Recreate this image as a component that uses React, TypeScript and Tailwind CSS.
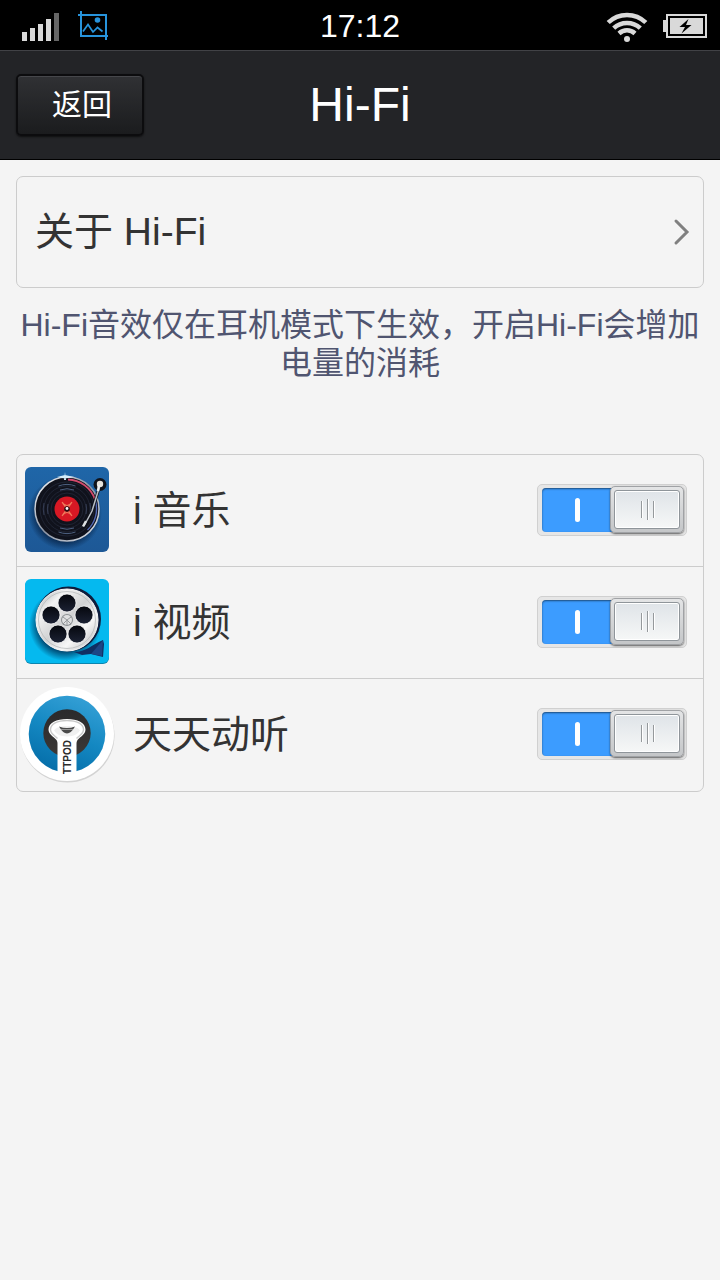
import { useState } from "react";

function SignalIcon() {
  return (
    <svg width="38" height="30" viewBox="0 0 38 30" aria-hidden="true">
      <g fill="#d9d9d9">
        <rect x="0" y="21" width="5" height="9" />
        <rect x="8" y="17" width="5" height="13" />
        <rect x="16" y="13" width="5" height="17" />
        <rect x="24" y="8" width="5" height="22" />
      </g>
      <rect x="32" y="2" width="5" height="28" fill="#666" />
    </svg>
  );
}

function ScreenshotIcon() {
  return (
    <svg width="32" height="30" viewBox="0 0 32 30" fill="none" stroke="#2794dc" strokeWidth="2" aria-hidden="true">
      <path d="M3 0v25h27" />
      <path d="M0 4h28v25" />
      <path d="M5 20.500l5-7 5 7.500 4.500-4.500 5 4" strokeWidth="1.700" />
      <circle cx="19.500" cy="9" r="2.800" fill="#2794dc" stroke="none" />
    </svg>
  );
}

function WifiIcon() {
  return (
    <svg width="42" height="32" viewBox="0 0 42 32" fill="none" stroke="#d9d9d9" strokeWidth="4.500" aria-hidden="true">
      <path d="M2.200 12.500a27 27 0 0 1 37.600 0" />
      <path d="M7.700 18.200a19.500 19.500 0 0 1 26.600 0" />
      <path d="M13 23.500a11.800 11.800 0 0 1 16 0" />
      <circle cx="21" cy="29" r="3" fill="#d9d9d9" stroke="none" />
    </svg>
  );
}

function BatteryIcon() {
  return (
    <svg width="44" height="24" viewBox="0 0 44 24" aria-hidden="true">
      <rect x="0" y="6" width="4" height="12" fill="#d9d9d9" />
      <rect x="4" y="1" width="39" height="22" fill="none" stroke="#d9d9d9" strokeWidth="2" />
      <rect x="7" y="4" width="33" height="16" fill="#d9d9d9" />
      <path d="M25.500 5l-9 8h5.500l-3.500 6.500 10-8.500h-5.500z" fill="#000" />
    </svg>
  );
}

function MusicIcon() {
  return (
    <svg width="96" height="96" viewBox="0 0 96 96" aria-hidden="true">
      <defs>
        <linearGradient id="musicBg" x1="0" y1="0" x2="0" y2="1">
          <stop offset="0" stopColor="#1f66a8" />
          <stop offset="1" stopColor="#1d5896" />
        </linearGradient>
        <radialGradient id="musicShade">
          <stop offset="0.700" stopColor="#041c3c" stopOpacity="0.900" />
          <stop offset="1" stopColor="#041c3c" stopOpacity="0" />
        </radialGradient>
        <linearGradient id="rim" x1="0" y1="0" x2="1" y2="1">
          <stop offset="0" stopColor="#ffffff" />
          <stop offset="0.500" stopColor="#8a93a3" />
          <stop offset="1" stopColor="#e6e9ee" />
        </linearGradient>
      </defs>
      <rect x="6" y="4" width="84" height="85" rx="6" fill="url(#musicBg)" />
      <circle cx="46" cy="50" r="37" fill="url(#musicShade)" />
      <circle cx="48" cy="46" r="32" fill="#10121c" stroke="url(#rim)" strokeWidth="1.500" />
      <g fill="none" stroke="#232838" strokeWidth="0.800">
        <circle cx="48" cy="46" r="27" />
        <circle cx="48" cy="46" r="23" />
        <circle cx="48" cy="46" r="19" />
        <circle cx="48" cy="46" r="16" />
      </g>
      <g fill="none" stroke="#4d6080" strokeWidth="1">
        <path d="M41 27a20 20 0 0 1 14 0M39.500 23a24 24 0 0 1 17 0M41 65a20 20 0 0 0 14 0M39.500 69a24 24 0 0 0 17 0" />
        <path d="M29 41a20 20 0 0 0 0 10M25 40a24 24 0 0 0 0 12M67 41a20 20 0 0 1 0 10M71 40a24 24 0 0 1 0 12" stroke="#353d54" />
      </g>
      <path d="M49 16.500a29.500 29.500 0 0 1 27 20" fill="none" stroke="#d24a6c" strokeWidth="1.800" />
      <path d="M76.500 38a29.500 29.500 0 0 1-8 29" fill="none" stroke="#5268b4" strokeWidth="1.400" />
      <circle cx="48" cy="46" r="12.500" fill="#d71824" />
      <path d="M43 39q5 7 10 0M43 53q5-7 10 0M43.500 40l9 12M52.500 40l-9 12" fill="none" stroke="#ef7a5c" strokeWidth="1.200" />
      <circle cx="48" cy="46" r="2.800" fill="#2b1014" />
      <circle cx="48" cy="45.500" r="1.400" fill="#fff" />
      <path d="M38 14l8-2 9 2-9 1.500zM46 9l1 8-2 0z" fill="#d5eefb" />
      <circle cx="81" cy="21.500" r="6.500" fill="#10131b" />
      <path d="M81 22l-8 26-8 15" fill="none" stroke="#10131b" strokeWidth="3" />
      <path d="M81 22l-8 26-8 15" fill="none" stroke="#b9bec6" strokeWidth="1.500" />
      <path d="M67 58l-3 5.500" stroke="#dfe1e4" strokeWidth="2.400" />
      <circle cx="81" cy="21" r="3.200" fill="#e7e3dc" />
      <path d="M80 22l-1 6" stroke="#eef0f2" strokeWidth="2.500" />
    </svg>
  );
}

const reelHoles = [
  [48, 28],
  [65, 40],
  [58, 59],
  [39, 59],
  [32, 40],
];

function VideoIcon() {
  return (
    <svg width="96" height="96" viewBox="0 0 96 96" aria-hidden="true">
      <defs>
        <linearGradient id="reel" x1="0" y1="0" x2="1" y2="1">
          <stop offset="0" stopColor="#9c9fa2" />
          <stop offset="0.250" stopColor="#f3f3f3" />
          <stop offset="0.500" stopColor="#d0d1d2" />
          <stop offset="0.700" stopColor="#f7f7f7" />
          <stop offset="1" stopColor="#aeb0b3" />
        </linearGradient>
        <radialGradient id="videoShade">
          <stop offset="0.750" stopColor="#00466f" stopOpacity="0.900" />
          <stop offset="1" stopColor="#00466f" stopOpacity="0" />
        </radialGradient>
        <linearGradient id="hole" x1="0" y1="0" x2="0" y2="1">
          <stop offset="0" stopColor="#05070d" />
          <stop offset="1" stopColor="#1c2234" />
        </linearGradient>
      </defs>
      <rect x="6" y="5" width="84" height="84" rx="6" fill="#0b86b0" />
      <rect x="6" y="4" width="84" height="84" rx="6" fill="#05b9ef" />
      <circle cx="46" cy="50" r="36" fill="url(#videoShade)" />
      <path d="M55 77c12 0 17-7 29-12l1 4-1 13-12-3-9 1z" fill="#102f62" />
      <path d="M72 79l12-14-1 16z" fill="#1c4685" />
      <circle cx="49.500" cy="44" r="32.500" fill="#0d1d3d" />
      <circle cx="48" cy="45" r="31" fill="url(#reel)" stroke="#f8f8f8" strokeWidth="1" />
      <circle cx="48" cy="45" r="28.500" fill="none" stroke="#b9bbbd" strokeWidth="0.800" />
      {reelHoles.map(([cx, cy]) => (
        <circle key={`${cx}-${cy}`} cx={cx} cy={cy} r="9" fill="url(#hole)" stroke="#fff" strokeWidth="0.700" />
      ))}
      <circle cx="48" cy="45" r="6" fill="#8b8f92" />
      <circle cx="48" cy="45" r="5" fill="#dfe0e1" />
      <path d="M44 42l4 3 4-3M44 49l4-4 4 4M48 45v5" fill="none" stroke="#95989b" strokeWidth="1" />
    </svg>
  );
}

function TtpodIcon() {
  return (
    <svg width="96" height="96" viewBox="0 0 96 96" aria-hidden="true">
      <defs>
        <linearGradient id="podBg" x1="0.700" y1="0" x2="0.300" y2="1">
          <stop offset="0" stopColor="#35a0d6" />
          <stop offset="0.500" stopColor="#1488c2" />
          <stop offset="1" stopColor="#056da8" />
        </linearGradient>
        <linearGradient id="podDark" x1="0" y1="0" x2="0" y2="1">
          <stop offset="0" stopColor="#2a2a2c" />
          <stop offset="1" stopColor="#3c3836" />
        </linearGradient>
      </defs>
      <circle cx="48.500" cy="48.500" r="47" fill="#d3d3d3" />
      <circle cx="48" cy="47" r="47" fill="#fff" />
      <circle cx="48" cy="47" r="38.300" fill="url(#podBg)" />
      <circle cx="48" cy="46" r="23.700" fill="url(#podDark)" />
      <path d="M29.500 42.500c0-6.500 8-10.500 18.500-10.500s18.500 4 18.500 10.500c0 5-5 7-8 10.500-1 1.500-1 3-1 5v28.500H38.500V58c0-2 0-3.500-1-5-3-3.500-8-5.500-8-10.500z" fill="#fff" />
      <path d="M38.500 51.500C35.500 48.500 31.500 47 31.500 42.500c0-5.500 7-9 16.500-9s16.500 3.500 16.500 9c0 4.500-4 6-7 9" fill="none" stroke="#c9c9c9" strokeWidth="1.400" />
      <path d="M35 43.500c3-6 23-6 26 0-2 3-6 6-13 6s-11-3-13-6z" fill="#f0f0f0" />
      <path d="M40 39.500q8 3 16 0-4 7-8 7t-8-7z" fill="#4a4a4a" />
      <path d="M42 42.500h12" stroke="#aaa" strokeWidth="0.800" />
      <text
        x="-70"
        y="52"
        transform="rotate(-90)"
        textAnchor="middle"
        fill="#2b2b2b"
        className="font-['Liberation_Sans'] text-[10px] font-bold">
        TTPOD
      </text>
    </svg>
  );
}

function Switch({ id, checked, onChange }: { id: string; checked: boolean; onChange: () => void }) {
  return (
    <span className="relative mb-0.5 block h-[52px] w-[150px] shrink-0">
      <input
        id={id}
        type="checkbox"
        checked={checked}
        onChange={onChange}
        className="peer block size-full cursor-pointer appearance-none rounded-[5px] border border-[#d0d0d0] bg-[#e6e6e6]"
      />
      {/* Track */}
      <span className="pointer-events-none absolute inset-x-[5px] inset-y-1 flex items-center rounded-[4px] bg-[#b9bcc0] pl-[33px] shadow-[inset_0_1px_2px_#0008] peer-checked:bg-[#3c9cff]">
        <span className="h-6 w-[5px] rounded-full bg-white" />
      </span>
      {/* Knob */}
      <span className="pointer-events-none absolute top-[2px] left-[3px] h-[47px] w-[74px] rounded-[5px] border border-[#a0a2a5] bg-linear-to-b from-[#e4e5e6] to-[#c4c6c8] p-[3px] shadow-[0_1px_2px_#0009] peer-checked:left-[73px]">
        <span className="flex h-full items-center justify-center gap-[5px] rounded-[3px] border border-[#8f959a] bg-linear-to-b from-[#dfe4e8] to-[#f6f7f7] shadow-[inset_0_0_0_1px_#fff]">
          <span className="h-[17px] w-px bg-[#95999c] shadow-[1px_0_#fff]" />
          <span className="h-[21px] w-px bg-[#95999c] shadow-[1px_0_#fff]" />
          <span className="h-[17px] w-px bg-[#95999c] shadow-[1px_0_#fff]" />
        </span>
      </span>
    </span>
  );
}

const apps = [
  { id: "music", name: "i 音乐", icon: <MusicIcon /> },
  { id: "video", name: "i 视频", icon: <VideoIcon /> },
  { id: "ttpod", name: "天天动听", icon: <TtpodIcon /> },
];

export default function App() {
  const [enabled, setEnabled] = useState<Record<string, boolean>>({ music: true, video: true, ttpod: true });

  return (
    <div className="min-h-screen bg-[#f4f4f4] font-['Liberation_Sans','Noto_Sans_CJK_SC',sans-serif] text-[#333]">
      {/* Status bar */}
      <div className="grid h-[50px] grid-cols-[1fr_auto_1fr] items-center bg-black px-[13px] text-white">
        <div className="flex items-center gap-[18px] pl-[9px]">
          <SignalIcon />
          <ScreenshotIcon />
        </div>
        <span className="text-[32px] leading-[52px]">17:12</span>
        <div className="flex items-center justify-end gap-[15px]">
          <WifiIcon />
          <BatteryIcon />
        </div>
      </div>

      {/* Title bar */}
      <header className="grid h-[110px] grid-cols-[1fr_auto_1fr] items-center border-t border-b border-t-[#414246] border-b-black bg-[#232427] px-4 text-white">
        <button
          type="button"
          className="h-[62px] w-32 cursor-pointer rounded-[5px] border-2 border-[#0c0c0e] bg-linear-to-b from-[#303134] to-[#1b1c1e] pl-1 text-[30px] leading-[38px] shadow-[inset_0_1px_#46474b,0_1px_2px_#0009]">
          返回
        </button>
        <h1 className="text-[48px] leading-[56px]">Hi-Fi</h1>
      </header>

      <main className="p-4">
        <a href="#about" className="flex h-28 items-center justify-between rounded-[7px] border border-[#ccc] pr-3 pl-[18px] text-[39px] leading-[56px]">
          关于 Hi-Fi
          <svg width="18" height="28" viewBox="0 0 18 28" fill="none" stroke="#808080" strokeWidth="3" strokeLinecap="round" aria-hidden="true">
            <path d="M3 3l11 11-11 11" />
          </svg>
        </a>

        <p className="mt-[18px] text-center text-[32px] leading-[38px] text-[#505570]">
          Hi-Fi音效仅在耳机模式下生效，开启Hi-Fi会增加电量的消耗
        </p>

        <ul className="mt-[72px] divide-y divide-[#ccc] rounded-[7px] border border-[#ccc]">
          {apps.map((app) => (
            <li key={app.id} className="flex h-28 items-center pr-4 pl-0.5">
              {app.icon}
              <label htmlFor={app.id} className="flex-1 cursor-pointer pl-[18px] text-[39px] leading-[56px]">
                {app.name}
              </label>
              <Switch
                id={app.id}
                checked={enabled[app.id]}
                onChange={() => setEnabled({ ...enabled, [app.id]: !enabled[app.id] })}
              />
            </li>
          ))}
        </ul>
      </main>
    </div>
  );
}
